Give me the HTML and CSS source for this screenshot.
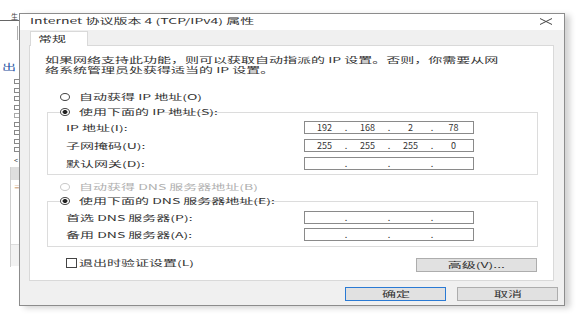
FILE: index.html
```html
<!DOCTYPE html>
<html lang="zh-CN">
<head>
  <meta charset="UTF-8" />
  <title>Internet 协议版本 4 (TCP/IPv4) 属性</title>
  <link rel="stylesheet" href="styles.css">
</head>
<body>
  <div class="screen">

    <!-- window behind the dialog, only its edge shows -->
    <div class="behind">
      <div class="b-head">生</div>
      <div class="b-rule"></div>
      <div class="b-link"><span class="t">出</span></div>
      <div class="b-tree">
        <i></i><i></i><i></i><i></i><i class="leaf"></i><i></i><i></i><i></i><i></i>
      </div>
      <div class="b-arrow">&lt;</div>
      <div class="b-pane">
        <div class="b-band"></div>
        <div class="b-mark">≡</div>
        <div class="b-foot"></div>
      </div>
    </div>

    <div class="dialog">
      <div class="titlebar">
        <span class="t">Internet 协议版本 4 (TCP/IPv4) 属性</span>
        <svg class="close" width="14" height="7" viewBox="0 0 14 7">
          <path d="M1 0.5 L13 6.5 M13 0.5 L1 6.5" stroke="#444" stroke-width="1" fill="none"/>
        </svg>
      </div>

      <div class="body">
        <div class="tab"><span class="t">常规</span></div>

        <div class="panel">
          <p class="desc">
            <span class="t">如果网络支持此功能，则可以获取自动指派的 IP 设置。否则，你需要从网</span><br>
            <span class="t">络系统管理员处获得适当的 IP 设置。</span>
          </p>

          <label class="radio top"><span class="dot"></span><span class="t">自动获得 IP 地址(O)</span></label>

          <fieldset class="group">
            <legend><label class="radio"><span class="dot on"></span><span class="t">使用下面的 IP 地址(S):</span></label></legend>
            <div class="row">
              <span class="lab"><span class="t">IP 地址(I):</span></span>
              <div class="ip"><span>192</span><i>.</i><span>168</span><i>.</i><span>2</span><i>.</i><span>78</span></div>
            </div>
            <div class="row">
              <span class="lab"><span class="t">子网掩码(U):</span></span>
              <div class="ip"><span>255</span><i>.</i><span>255</span><i>.</i><span>255</span><i>.</i><span>0</span></div>
            </div>
            <div class="row">
              <span class="lab"><span class="t">默认网关(D):</span></span>
              <div class="ip"><span></span><i>.</i><span></span><i>.</i><span></span><i>.</i><span></span></div>
            </div>
          </fieldset>

          <label class="radio top off"><span class="dot"></span><span class="t">自动获得 DNS 服务器地址(B)</span></label>

          <fieldset class="group dns">
            <legend><label class="radio"><span class="dot on"></span><span class="t">使用下面的 DNS 服务器地址(E):</span></label></legend>
            <div class="row">
              <span class="lab"><span class="t">首选 DNS 服务器(P):</span></span>
              <div class="ip"><span></span><i>.</i><span></span><i>.</i><span></span><i>.</i><span></span></div>
            </div>
            <div class="row">
              <span class="lab"><span class="t">备用 DNS 服务器(A):</span></span>
              <div class="ip"><span></span><i>.</i><span></span><i>.</i><span></span><i>.</i><span></span></div>
            </div>
          </fieldset>

          <div class="options">
            <label class="check"><span class="box"></span><span class="t">退出时验证设置(L)</span></label>
            <button class="btn adv"><span class="t">高级(V)...</span></button>
          </div>
        </div>

        <div class="footer">
          <button class="btn ok"><span class="t">确定</span></button>
          <button class="btn"><span class="t">取消</span></button>
        </div>
      </div>
    </div>

  </div>
</body>
</html>
```

FILE: styles.css
```css
* {
  box-sizing: border-box;
}
body {
  margin: 0;
  background: #fff;
  font-family: "Noto Sans CJK SC", "Noto Sans", sans-serif;
  font-size: 8px;
  color: #333;
}
.screen {
  display: flex;
  align-items: flex-start;
  height: 316px;
  overflow: hidden;
}
/* the screenshot is stretched sideways, so text is too */
.t {
  display: inline-block;
  transform: scaleX(1.75);
  transform-origin: 0 50%;
  white-space: nowrap;
}

/* window behind */
.behind {
  width: 19px;
  flex-shrink: 0;
  overflow: hidden;
  color: #444;
}
.b-head {
  margin-top: 12px;
  height: 9px;
  line-height: 8px;
  font-size: 7px;
  padding-left: 11px;
  border-bottom: 1px solid #666;
}
.b-rule {
  margin: 5px 0 0 17px;
  width: 1px;
  height: 14px;
  background: #b0b0b0;
}
.b-link {
  margin-top: 22px;
  height: 9px;
  line-height: 9px;
  padding-left: 2px;
  color: #1e50a2;
}
.b-tree {
  margin-top: 8px;
  display: flex;
  flex-direction: column;
  gap: 3.5px;
}
.b-tree i {
  display: block;
  margin-left: 14px;
  width: 7px;
  height: 5px;
  border: 1px solid #888;
}
.b-tree i.leaf {
  border-color: #aaa;
}
.b-arrow {
  margin-top: 4px;
  height: 9px;
  line-height: 9px;
  font-size: 7px;
  padding-left: 14px;
}
.b-pane {
  margin: 2px 0 0 10px;
  height: 100px;
  border-left: 1px solid #cfcfcf;
}
.b-band {
  height: 13px;
  background: #dedede;
}
.b-mark {
  margin-top: 2px;
  padding-left: 3px;
  font-size: 6px;
  line-height: 9px;
  color: #b8793a;
}
.b-foot {
  margin-top: 53px;
  height: 22px;
  background: #f2f2f2;
  border-top: 1px solid #ddd;
}

/* dialog */
.dialog {
  width: 546px;
  flex-shrink: 0;
  margin-top: 13px;
  border: 1px solid #8c8c8c;
  background: #f0f0f0;
  box-shadow: 5px 2px 6px rgba(0,0,0,0.18);
}
.titlebar {
  height: 16px;
  background: #fff;
  display: flex;
  align-items: center;
  justify-content: space-between;
  padding: 0 11px 2px 10px;
  line-height: 12px;
}
.close {
  display: block;
  margin-bottom: -1px;
}
.body {
  padding-top: 1px;
}
.tab {
  position: relative;
  margin-left: 10px;
  margin-bottom: -1px;
  width: 58px;
  height: 15px;
  background: #fff;
  border: 1px solid #d9d9d9;
  border-bottom: none;
  padding-left: 7px;
  line-height: 14px;
}
.panel {
  margin: 0 10px 0 9px;
  background: #fff;
  border: 1px solid #d9d9d9;
  padding: 9px 15px 8px;
}
.desc {
  margin: 0;
  line-height: 10px;
}

.radio {
  display: flex;
  align-items: center;
  gap: 9px;
  height: 12px;
  line-height: 12px;
}
.radio.top {
  margin: 16px 0 0 15px;
}
.radio.off {
  margin-top: 6px;
  color: #b0b0b0;
}
.dot {
  width: 10px;
  height: 8px;
  border: 1px solid #444;
  border-radius: 50%;
  background: #fff;
}
.dot.on {
  background: radial-gradient(closest-side, #222 55%, #fff 70%);
}
.radio.off .dot {
  border-color: #c8c8c8;
}

.group {
  margin: 3px 0 0 2px;
  padding: 0 0 4px 12px;
  border: 1px solid #dcdcdc;
  min-width: 0;
}
.group legend {
  padding: 0 3px 0 0;
  height: 12px;
}
.group.dns {
  margin-top: 2px;
  padding-bottom: 5px;
}
.row {
  display: flex;
  align-items: center;
  height: 13px;
  margin: 5px 0 0 6px;
}
.group legend + .row {
  margin-top: 3px;
}
.group.dns .row {
  margin-top: 4px;
}
.lab {
  width: 238px;
  flex-shrink: 0;
}
.ip {
  width: 170px;
  height: 13px;
  border: 1px solid #8a8a8a;
  display: grid;
  grid-template-columns: 1fr 4px 1fr 4px 1fr 4px 1fr;
  text-align: center;
  font-size: 9px;
  line-height: 11px;
  color: #333;
}
.ip i {
  font-style: normal;
}

.options {
  display: flex;
  justify-content: space-between;
  align-items: flex-start;
  margin: 10px 1px 0 21px;
}
.check {
  display: flex;
  align-items: center;
  gap: 2px;
  height: 11px;
}
.box {
  width: 11px;
  height: 10px;
  border: 1px solid #444;
}

.btn {
  height: 14px;
  padding: 0;
  font: inherit;
  color: #333;
  line-height: 12px;
  text-align: center;
  background: #e1e1e1;
  border: 1px solid #adadad;
}
.btn .t {
  transform-origin: 50% 50%;
}
.btn.adv {
  width: 121px;
  margin-top: 1px;
}
.footer {
  display: flex;
  justify-content: flex-end;
  gap: 11px;
  padding: 6px 6px 4px;
}
.footer .btn {
  width: 101px;
}
.btn.ok {
  border-color: #2a7ad4;
}
```
